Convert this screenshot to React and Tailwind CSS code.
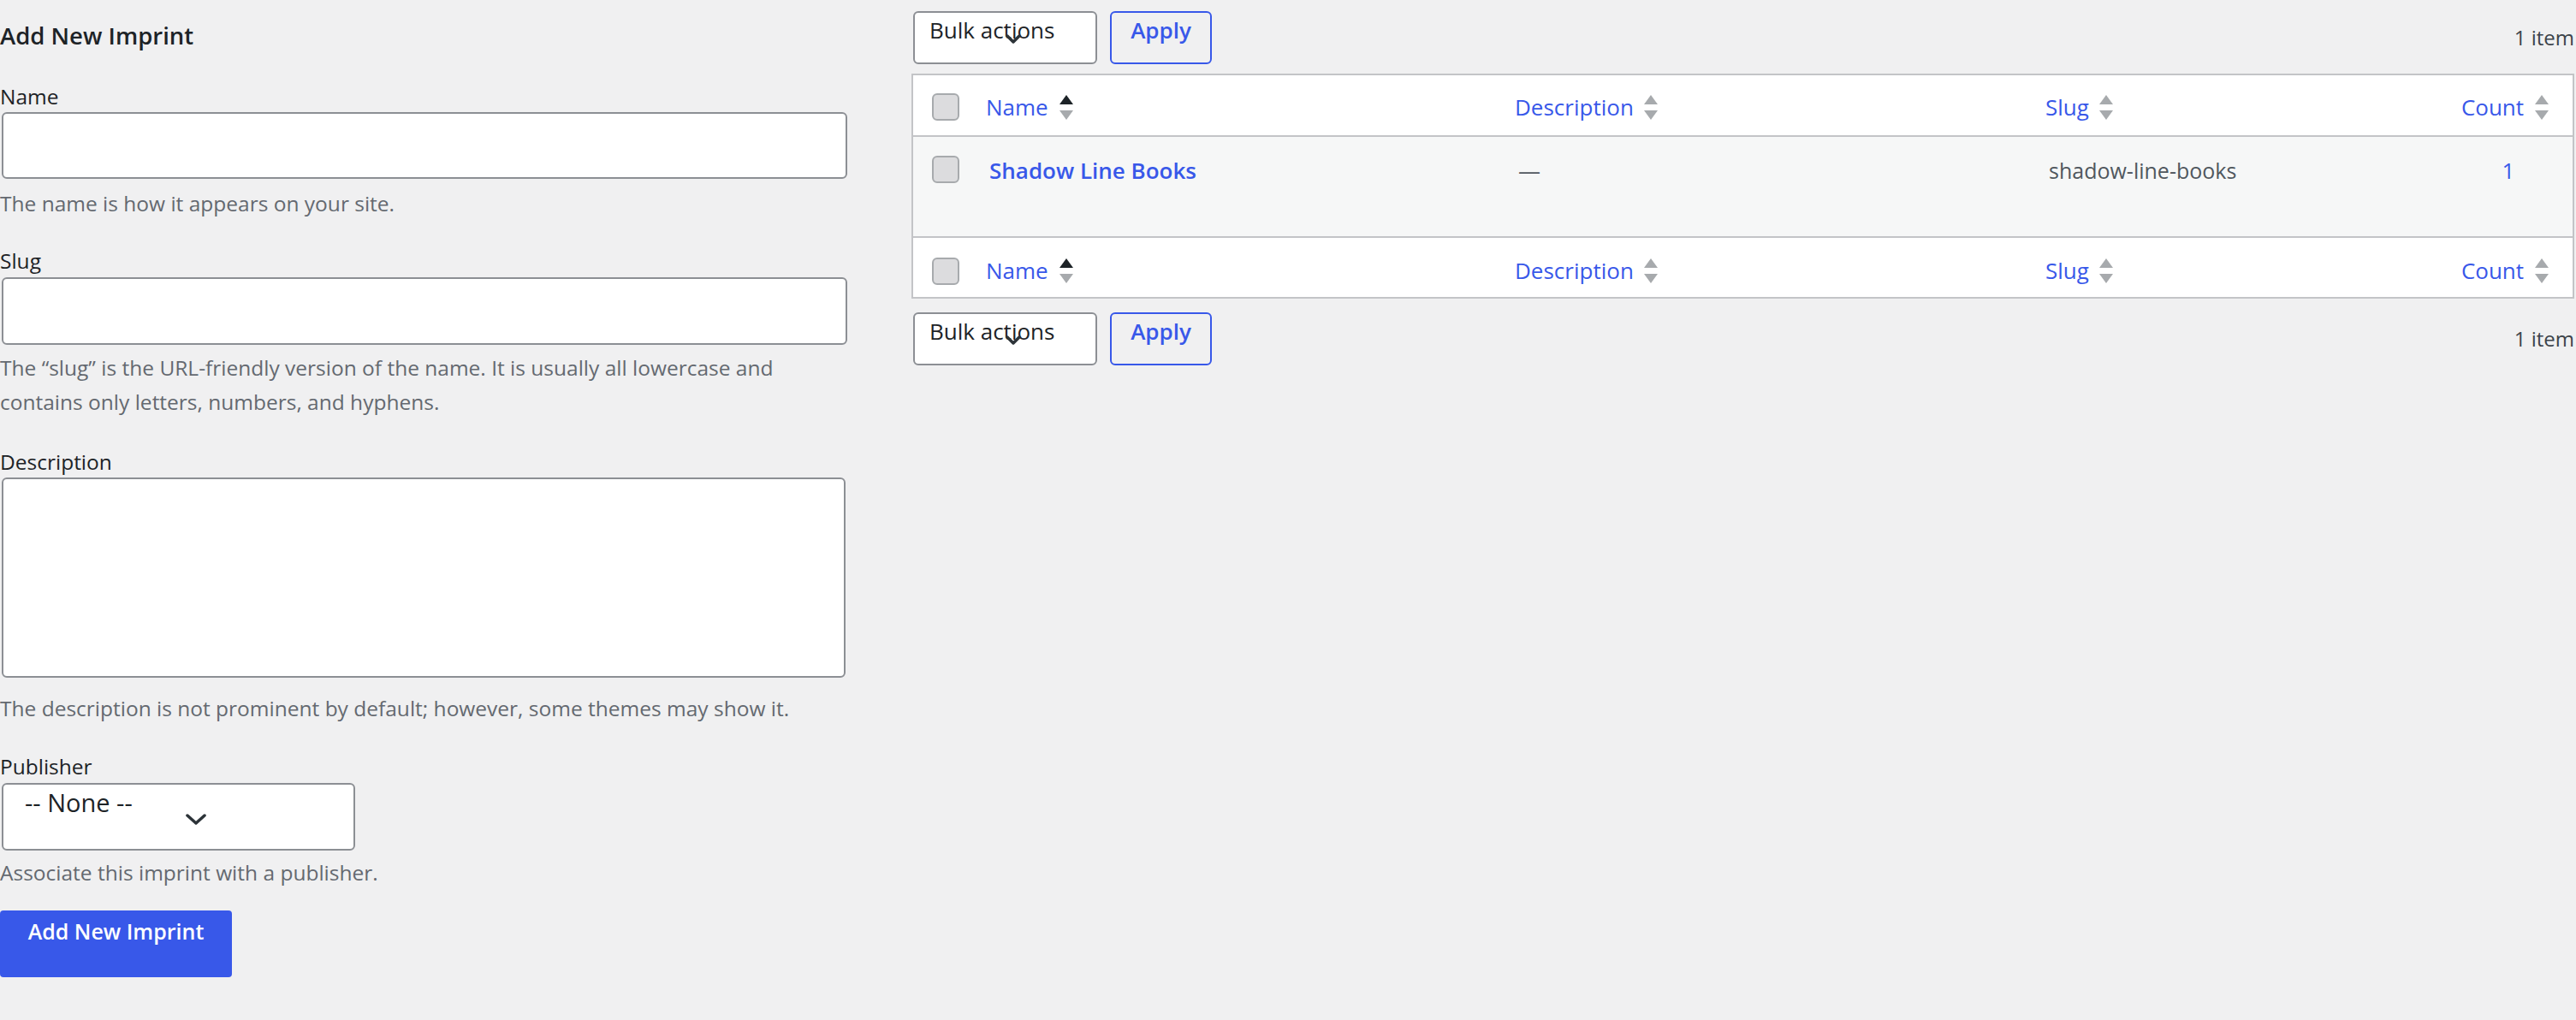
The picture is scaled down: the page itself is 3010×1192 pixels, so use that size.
function SortArrows({ active }) {
  return (
    <svg width="16" height="29" viewBox="0 0 16 29" className="shrink-0">
      <polygon points="0,11 8,0 16,11" fill={active ? '#1d2327' : '#a7aaad'} />
      <polygon points="0,18 16,18 8,29" fill="#a7aaad" />
    </svg>
  );
}

function Checkbox() {
  return <div className="w-[32px] h-[32px] rounded-[6px] border-2 border-[#a7aaad] bg-[#dcdcde]" />;
}

function Chevron({ className, w, h }) {
  return (
    <svg width={w} height={h} viewBox={`0 0 ${w} ${h}`} className={className}>
      <polyline
        points={`2,2 ${w / 2},${h - 2} ${w - 2},2`}
        fill="none"
        stroke="#2c3338"
        strokeWidth="3.5"
        strokeLinecap="round"
        strokeLinejoin="round"
      />
    </svg>
  );
}

function Field({ label, children, help, className = '' }) {
  return (
    <div className={className}>
      <label className="block text-[24.5px] leading-[36px] text-[#1d2327]">{label}</label>
      {children}
      {help}
    </div>
  );
}

function HeadRow({ className = 'h-[70px] pt-[4px]' }) {
  return (
    <div className={`flex items-center text-[26px] text-[#3858e9] ${className}`}>
      <div className="w-[65px] shrink-0 pl-[22px]">
        <Checkbox />
      </div>
      <div className="w-[618px] shrink-0 pl-[20px] flex items-center gap-[13px]">
        <span>Name</span>
        <SortArrows active />
      </div>
      <div className="w-[620px] shrink-0 pl-[20px] flex items-center gap-[12px]">
        <span>Description</span>
        <SortArrows />
      </div>
      <div className="w-[486px] shrink-0 pl-[20px] flex items-center gap-[12px]">
        <span>Slug</span>
        <SortArrows />
      </div>
      <div className="flex-1 flex items-center justify-center gap-[13px] pr-[8px]">
        <span>Count</span>
        <SortArrows />
      </div>
    </div>
  );
}

function TableNav({ className = '' }) {
  return (
    <div className={`flex items-center ${className}`}>
      <div className="relative ml-[2px] w-[215px] h-[62px] bg-white border-2 border-[#8c8f94] rounded-[6px] pl-[17px] pt-[2px] text-[26px] leading-[36px] text-[#1d2327]">
        Bulk actions
        <Chevron w={18} h={11} className="absolute left-[106px] top-[25px]" />
      </div>
      <button className="ml-[15px] w-[119px] h-[62px] border-2 border-[#3858e9] rounded-[6px] bg-[#f0f0f1] text-[26px] font-semibold leading-[36px] text-[#3858e9] flex justify-center pt-[2px]">
        Apply
      </button>
      <span className="ml-auto text-[24px] text-[#3c434a]">1 item</span>
    </div>
  );
}

export default function App() {
  return (
    <div className="min-h-screen bg-[#f0f0f1] font-['Open_Sans',sans-serif] text-[#1d2327] flex">
      {/* FORM */}
      <div className="w-[990px] shrink-0">
        <h2 className="mt-[22px] text-[27.5px] font-semibold leading-[40px]">Add New Imprint</h2>

        <Field
          label="Name"
          className="mt-[33px]"
          help={<p className="mt-[9px] text-[24.5px] leading-[40px] text-[#646970]">The name is how it appears on your site.</p>}
        >
          <input className="block ml-[2px] w-[988px] h-[78px] bg-white border-2 border-[#8c8f94] rounded-[6px] outline-none" />
        </Field>

        <Field
          label="Slug"
          className="mt-[29px]"
          help={
            <p className="mt-[7px] text-[24.5px] leading-[40px] text-[#646970]">
              The “slug” is the URL-friendly version of the name. It is usually all lowercase and
              <br />
              contains only letters, numbers, and hyphens.
            </p>
          }
        >
          <input className="block ml-[2px] mt-[1px] w-[988px] h-[79px] bg-white border-2 border-[#8c8f94] rounded-[6px] outline-none" />
        </Field>

        <Field
          label="Description"
          className="mt-[32px]"
          help={
            <p className="mt-[16px] text-[24.5px] leading-[40px] text-[#646970]">
              The description is not prominent by default; however, some themes may show it.
            </p>
          }
        >
          <textarea className="block ml-[2px] w-[986px] h-[234px] bg-white border-2 border-[#8c8f94] rounded-[6px] outline-none resize-none" />
        </Field>

        <Field
          label="Publisher"
          className="mt-[30px]"
          help={<p className="mt-[6px] text-[24.5px] leading-[40px] text-[#646970]">Associate this imprint with a publisher.</p>}
        >
          <div className="relative ml-[2px] mt-[1px] w-[413px] h-[79px] bg-white border-2 border-[#8c8f94] rounded-[6px] pl-[25px] pt-[3px] text-[29px] leading-[36px]">
            -- None --
            <Chevron w={24} h={13} className="absolute left-[213px] top-[34px]" />
          </div>
        </Field>

        <button className="mt-[24px] w-[271px] h-[78px] bg-[#3858e9] rounded-[4px] text-white text-[25px] font-semibold leading-[36px] flex justify-center pt-[6px]">
          Add New Imprint
        </button>
      </div>

      {/* LIST */}
      <div className="flex-1 ml-[75px] mr-[2px]">
        <TableNav className="mt-[13px]" />

        <div className="mt-[11px] border-2 border-[#c3c4c7] bg-white">
          <div className="border-b-2 border-[#c3c4c7]">
            <HeadRow />
          </div>

          <div className="flex items-start h-[118px] bg-[#f6f7f7] border-b-2 border-[#c3c4c7] text-[26px] leading-[36px]">
            <div className="w-[65px] shrink-0 pl-[22px] pt-[22px]">
              <Checkbox />
            </div>
            <div className="w-[618px] shrink-0 pl-[24px] pt-[21px]">
              <a className="font-semibold text-[#3858e9]">Shadow Line Books</a>
            </div>
            <div className="w-[620px] shrink-0 pl-[24px] pt-[21px] text-[#50575e]">—</div>
            <div className="w-[486px] shrink-0 pl-[24px] pt-[21px] text-[25px] text-[#50575e]">shadow-line-books</div>
            <div className="flex-1 pt-[21px] flex justify-center text-[#3858e9]">1</div>
          </div>

          <HeadRow className="h-[69px] pt-[8px]" />
        </div>

        <TableNav className="mt-[16px]" />
      </div>
    </div>
  );
}
